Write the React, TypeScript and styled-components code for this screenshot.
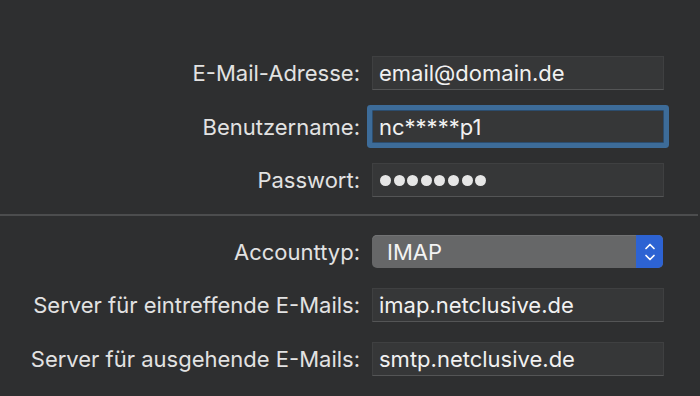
import React from "react"
import styled, { createGlobalStyle } from "styled-components"

const GlobalStyle = createGlobalStyle`
  html, body {
    margin: 0;
    padding: 0;
    background: #2e2f30;
  }
  body {
    font-family: Inter, "Liberation Sans", sans-serif;
    -webkit-font-smoothing: antialiased;
  }
`

const Page = styled.div`
  width: 700px;
  height: 396px;
  overflow: hidden;
  background: #2e2f30;
`

const Section = styled.div<{ $top: number }>`
  display: grid;
  grid-template-columns: 360px 292px;
  column-gap: 12px;
  row-gap: 20px;
  align-items: center;
  padding-top: ${(p) => p.$top}px;
`

const Label = styled.label`
  justify-self: end;
  font-size: 22px;
  color: #e2e2e2;
  white-space: nowrap;
`

const Field = styled.div<{ $focused?: boolean }>`
  box-sizing: border-box;
  height: ${(p) => (p.$focused ? 33 : 34)}px;
  display: flex;
  align-items: center;
  padding: 0 6px;
  background: #363738;
  border: 1px solid #3f4041;
  border-bottom-color: #545556;
  font-size: 22px;
  color: #f1f1f1;
  white-space: nowrap;
  ${(p) =>
    p.$focused &&
    `
    border-radius: 1px;
    border-color: #2c4d6e;
    box-shadow: 0 0 0 5px #3d6c99;
  `}
`

const Dots = styled.span`
  display: flex;
  gap: 2.6px;
  padding-left: 1px;
`

const Dot = styled.span`
  width: 11px;
  height: 11px;
  border-radius: 50%;
  background: #e6e6e6;
`

const Divider = styled.div`
  height: 2px;
  width: 698px;
  margin-top: 17px;
  background: #4c4d4e;
`

const Select = styled.div`
  box-sizing: border-box;
  height: 33px;
  width: 291px;
  display: flex;
  border-radius: 5px;
  overflow: hidden;
  background: #666768;
  box-shadow: inset 0 1px 0 #727374;
`

const SelectValue = styled.div`
  flex: 1;
  display: flex;
  align-items: center;
  padding-left: 15px;
  font-size: 22px;
  color: #f3f3f3;
`

const Stepper = styled.div`
  width: 27px;
  display: flex;
  align-items: center;
  justify-content: center;
  background: #2d63d3;
`

function Chevrons() {
  return (
    <svg width="14" height="24" viewBox="0 0 14 24" fill="none">
      <path d="M3 8.5 L7 4.5 L11 8.5" stroke="#fff" strokeWidth="1.7" strokeLinecap="round" strokeLinejoin="round" />
      <path d="M3 15.5 L7 19.5 L11 15.5" stroke="#fff" strokeWidth="1.7" strokeLinecap="round" strokeLinejoin="round" />
    </svg>
  )
}

export default function App() {
  return (
    <Page>
      <GlobalStyle />
      <Section $top={56}>
        <Label>E-Mail-Adresse:</Label>
        <Field>email@domain.de</Field>
        <Label>Benutzername:</Label>
        <Field $focused>nc*****p1</Field>
        <Label>Passwort:</Label>
        <Field>
          <Dots>
            {Array.from({ length: 8 }, (_, i) => (
              <Dot key={i} />
            ))}
          </Dots>
        </Field>
      </Section>
      <Divider />
      <Section $top={19}>
        <Label>Accounttyp:</Label>
        <Select>
          <SelectValue>IMAP</SelectValue>
          <Stepper>
            <Chevrons />
          </Stepper>
        </Select>
        <Label>Server für eintreffende E-Mails:</Label>
        <Field>imap.netclusive.de</Field>
        <Label>Server für ausgehende E-Mails:</Label>
        <Field>smtp.netclusive.de</Field>
      </Section>
    </Page>
  )
}
